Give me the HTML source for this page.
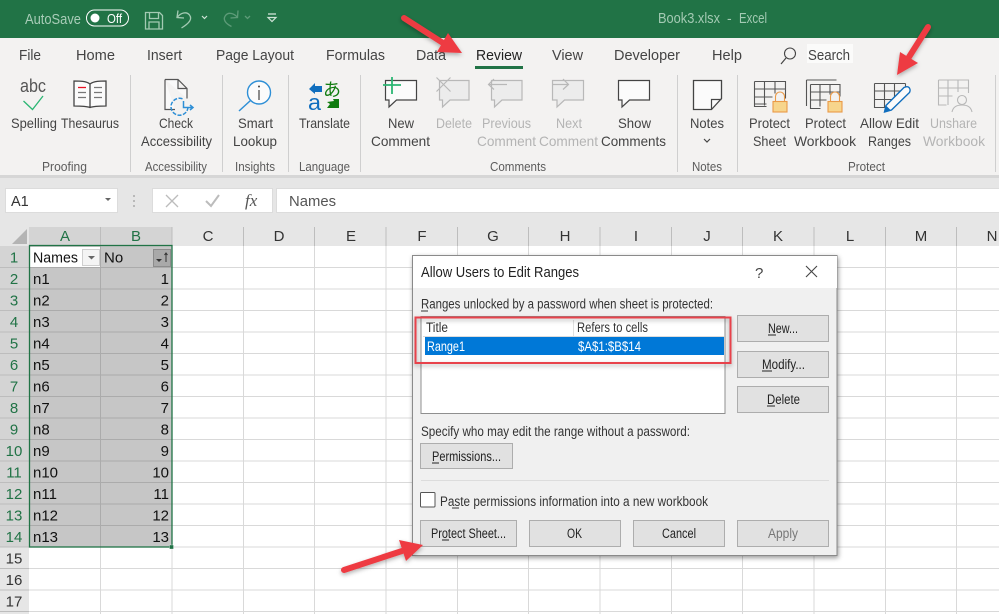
<!DOCTYPE html>
<html>
<head>
<meta charset="utf-8">
<title>Book3.xlsx - Excel</title>
<style>
html,body{margin:0;padding:0;width:999px;height:614px;overflow:hidden;background:#fff}
svg{display:block;font-family:"Liberation Sans",sans-serif;filter:blur(.3px)}
.tab{font-size:14.5px;fill:#444}
.r{font-size:14px;fill:#444}
.d{font-size:14px;fill:#b4b4b4}
.g{font-size:13px;fill:#5c5c5c}
.h{font-size:15px;fill:#333;text-anchor:middle}
.hs{font-size:15px;fill:#217346;text-anchor:middle}
.c{font-size:15px;fill:#111}
.n{font-size:15px;fill:#111;text-anchor:end}
.t{font-size:13.5px;fill:#333}
.b{font-size:13.5px;fill:#222}
.btn{fill:#e1e1e1;stroke:#adadad;stroke-width:1}
</style>
</head>
<body>
<svg width="999" height="614" viewBox="0 0 999 614" xmlns="http://www.w3.org/2000/svg">
<defs>
<filter id="sh" x="-10%" y="-10%" width="125%" height="125%"><feDropShadow dx="1" dy="2" stdDeviation="2.5" flood-color="#000" flood-opacity=".4"/></filter>
<filter id="ash" x="-30%" y="-30%" width="170%" height="170%"><feDropShadow dx="0" dy="2" stdDeviation="2" flood-color="#000" flood-opacity=".3"/></filter>
</defs>

<!-- title bar -->
<rect width="999" height="38" fill="#217346"/>
<text x="25" y="24" font-size="14.500" fill="#a9cdb8" textLength="56" lengthAdjust="spacingAndGlyphs">AutoSave</text>
<rect x="86.500" y="10" width="42" height="16" rx="8" fill="none" stroke="#fff"/>
<circle cx="95" cy="18" r="4.500" fill="#fff"/>
<text x="107" y="23" font-size="13" fill="#fff" textLength="15" lengthAdjust="spacingAndGlyphs">Off</text>
<g fill="none" stroke="#a3cab3" stroke-width="1.300">
<path d="M145.500 12.500h14l3 3v13.500h-17z"/><path d="M149.500 12.500v6h9v-6M149 29v-7h10v7"/>
<path d="M178 10.500l-1 7 7 .5M177.500 17c3-4 9-6 12-2 3 4 0 8-8 13"/>
</g>
<path d="M202 16l2.500 2.500 2.500-2.500" fill="none" stroke="#cfe3d7" stroke-width="1.200"/>
<g fill="none" stroke="#5d9b78" stroke-width="1.300">
<path d="M238 10.500l-.5 7-7 .5M237.500 17.500c-3-4-9-6-12-2-3 4 0 8 6 11"/>
<path d="M245 16l2.500 2.500 2.500-2.500"/>
</g>
<path d="M268 14h8" stroke="#cfe3d7" stroke-width="1.300"/>
<path d="M268 17.500h8l-4 4z" fill="none" stroke="#cfe3d7" stroke-width="1.200"/>
<text x="658" y="23" font-size="14.500" fill="#a3cab3" textLength="62" lengthAdjust="spacingAndGlyphs">Book3.xlsx</text>
<text x="727" y="23" font-size="14" fill="#a3cab3">-</text>
<text x="739" y="23" font-size="14.500" fill="#a3cab3" textLength="28" lengthAdjust="spacingAndGlyphs">Excel</text>

<!-- ribbon -->
<rect y="38" width="999" height="138" fill="#f3f2f1"/>
<rect y="176" width="999" height="70" fill="#e6e6e6"/>
<rect y="175" width="999" height="3" fill="#d6d6d6"/>

<text class="tab" x="19" y="60" textLength="22" lengthAdjust="spacingAndGlyphs">File</text>
<text class="tab" x="76" y="60" textLength="39" lengthAdjust="spacingAndGlyphs">Home</text>
<text class="tab" x="147" y="60" textLength="35" lengthAdjust="spacingAndGlyphs">Insert</text>
<text class="tab" x="216" y="60" textLength="78" lengthAdjust="spacingAndGlyphs">Page Layout</text>
<text class="tab" x="326" y="60" textLength="59" lengthAdjust="spacingAndGlyphs">Formulas</text>
<text class="tab" x="416" y="60" textLength="30" lengthAdjust="spacingAndGlyphs">Data</text>
<text class="tab" x="476" y="60" textLength="46" lengthAdjust="spacingAndGlyphs" style="fill:#222">Review</text>
<rect x="475" y="66" width="48" height="3" fill="#217346"/>
<text class="tab" x="552" y="60" textLength="31" lengthAdjust="spacingAndGlyphs">View</text>
<text class="tab" x="614" y="60" textLength="66" lengthAdjust="spacingAndGlyphs">Developer</text>
<text class="tab" x="712" y="60" textLength="30" lengthAdjust="spacingAndGlyphs">Help</text>
<circle cx="790" cy="53.500" r="5.500" fill="none" stroke="#444" stroke-width="1.100"/>
<path d="M786 58l-5 6" stroke="#444" stroke-width="1.200"/>
<rect x="807" y="44" width="46" height="19" fill="#fbfbfa"/>
<text class="tab" x="808" y="60" textLength="42" lengthAdjust="spacingAndGlyphs">Search</text>

<!-- separators -->
<g fill="#cfcfcf">
<rect x="130" y="75" width="1" height="97"/><rect x="222" y="75" width="1" height="97"/>
<rect x="288" y="75" width="1" height="97"/><rect x="360" y="75" width="1" height="97"/>
<rect x="677" y="75" width="1" height="97"/><rect x="737" y="75" width="1" height="97"/>
<rect x="995" y="75" width="1" height="97"/>
</g>

<!-- icons: proofing -->
<text x="20" y="92" font-size="18.500" fill="#555" textLength="26" lengthAdjust="spacingAndGlyphs">abc</text>
<path d="M23.500 101l9 8.500 10.500-13.500" fill="none" stroke="#2bb673" stroke-width="1.300"/>
<path d="M90 84c-4-3-10-3-16-3v25c6 0 12 0 16 1.500 4-1.500 10-1.500 16-1.500v-25c-6 0-12 0-16 3zM90 84v23" fill="#fbfbfb" stroke="#444" stroke-width="1.300"/>
<path d="M78 87.500h8" stroke="#e81123" stroke-width="1.300"/>
<path d="M78 92.500h8M78 97.500h8M94 87.500h8M94 92.500h8M94 97.500h8" stroke="#777" stroke-width="1.200"/>

<!-- check accessibility -->
<path d="M165 79.500h13l9 9v10M178 79.500v9h9M165 79.500v30h10" fill="#f9f9f9" stroke="#555" stroke-width="1.200"/>
<path d="M188 107a8.500 8.500 0 1 1-5-8" fill="none" stroke="#2e8fd6" stroke-width="1.500" stroke-dasharray="4 1.500"/>
<path d="M183.500 101v6.500h9M190 105l3 2.500-3 2.500" fill="none" stroke="#2e8fd6" stroke-width="1.500"/>

<!-- smart lookup -->
<circle cx="259" cy="92.500" r="11.500" fill="#fbfbfb" stroke="#2e8fd6" stroke-width="1.400"/>
<path d="M250.500 100.500l-11.500 10.500" stroke="#2e8fd6" stroke-width="1.500"/>
<path d="M259 90v10" stroke="#444" stroke-width="1.200"/><circle cx="259" cy="86.500" r="1" fill="#444"/>

<!-- translate -->
<path d="M309 89l6-6v3h7v6h-7v2z" fill="#106ebe"/>
<text x="308" y="110" font-size="22" fill="#106ebe" textLength="13" lengthAdjust="spacingAndGlyphs">a</text>
<text x="323" y="96" font-size="18" fill="#107c10" font-family="'Noto Sans CJK JP',sans-serif">あ</text>
<path d="M339 99v9h-12l3-4-3-2 7-1-1-2z" fill="#107c10"/>

<!-- comments -->
<g stroke="#444" stroke-width="1.200">
<path d="M385.500 80.500h31v19.500h-20l-7.500 7v-7h-3.500z" fill="#fbfbfb"/>
<path d="M618.500 80.500h31v19.500h-20l-7.500 7v-7h-3.500z" fill="#fbfbfb"/>
</g>
<path d="M392 77v17M383 85h18" stroke="#2bb673" stroke-width="1.800"/>
<g stroke="#b8b8b8" stroke-width="1.200" fill="#ececec">
<path d="M439.500 80.500h29.500v19.500h-19l-7.500 7v-7h-3z"/>
<path d="M491.500 80.500h30.500v19.500h-20l-7.500 7v-7h-3z"/>
<path d="M552.500 80.500h31v19.500h-19l-7.500 7v-7h-4.500z"/>
<path d="M436.500 77.500l14 14M450.500 77.500l-14 14" fill="none"/>
<path d="M507 84.500h-18M494 79l-5.500 5.500 5.500 5" fill="none"/>
<path d="M552 84.500h16M563 79l5.500 5.500-5.500 5" fill="none"/>
</g>

<!-- notes -->
<path d="M693.500 80.500h28v18l-10 11h-18z" fill="#fbfbfb" stroke="#444" stroke-width="1.300"/>
<path d="M711.500 109.500v-10h10" fill="none" stroke="#444" stroke-width="1.200"/>
<path d="M704 139l3 3 3-3" fill="none" stroke="#444" stroke-width="1.200"/>

<!-- protect sheet, workbook, allow edit, unshare -->
<g fill="none" stroke="#555" stroke-width="1.100">
<path d="M754.500 81.500h31v17M754.500 81.500v25h12M754.500 89h31M754.500 97h18M754.500 104h12M764.500 81.500v24M775 81.500v12"/>
<path d="M810.500 84.500h29.500v12M810.500 84.500v24h10M810.500 92h29M810.500 100h16M820 84.500v22M830 84.500v10M806.500 80h30M806.500 80v26"/>
<path d="M874.500 83.500h31M874.500 83.500v24h19M874.500 91h30M874.500 99.500h22M884.500 83.500v24M894.500 83.500v18M905.500 83.500v6"/>
</g>
<g fill="#f7d58c" stroke="#ea9a48" stroke-width="1.100">
<rect x="773" y="101.500" width="14" height="10.500"/><rect x="828" y="101.500" width="14" height="10.500"/>
<path d="M775.500 101.500v-5a4.500 4.500 0 0 1 9 0v5M830.500 101.500v-5a4.500 4.500 0 0 1 9 0v5" fill="none"/>
</g>
<path d="M884.500 112l1.500-6.500 18-18c2-1 4-1 5 0s1.500 3 .5 5l-18 17.500z" fill="#fbfbfb" stroke="#106ebe" stroke-width="1.400"/>
<path d="M884.500 112l1.500-6.500 5 5z" fill="#106ebe"/>
<g fill="none" stroke="#b8b8b8" stroke-width="1.100">
<path d="M938.500 80h30v13M938.500 80v25h8M938.500 88h30M938.500 96h14M948 80v25M958 80v12"/>
<circle cx="962" cy="100" r="4.500"/><path d="M952 112c1-5 5-7 10-7s9 2 10 7"/>
</g>

<!-- ribbon labels -->
<text class="r" x="11" y="128" textLength="46" lengthAdjust="spacingAndGlyphs">Spelling</text>
<text class="r" x="61" y="128" textLength="58" lengthAdjust="spacingAndGlyphs">Thesaurus</text>
<text class="r" x="159" y="128" textLength="34" lengthAdjust="spacingAndGlyphs">Check</text>
<text class="r" x="141" y="146" textLength="71" lengthAdjust="spacingAndGlyphs">Accessibility</text>
<text class="r" x="238" y="128" textLength="35" lengthAdjust="spacingAndGlyphs">Smart</text>
<text class="r" x="233" y="146" textLength="44" lengthAdjust="spacingAndGlyphs">Lookup</text>
<text class="r" x="299" y="128" textLength="51" lengthAdjust="spacingAndGlyphs">Translate</text>
<text class="r" x="388" y="128" textLength="26" lengthAdjust="spacingAndGlyphs">New</text>
<text class="r" x="371" y="146" textLength="59" lengthAdjust="spacingAndGlyphs">Comment</text>
<text class="d" x="436" y="128" textLength="36" lengthAdjust="spacingAndGlyphs">Delete</text>
<text class="d" x="482" y="128" textLength="49" lengthAdjust="spacingAndGlyphs">Previous</text>
<text class="d" x="477" y="146" textLength="59" lengthAdjust="spacingAndGlyphs">Comment</text>
<text class="d" x="556" y="128" textLength="26" lengthAdjust="spacingAndGlyphs">Next</text>
<text class="d" x="539" y="146" textLength="59" lengthAdjust="spacingAndGlyphs">Comment</text>
<text class="r" x="618" y="128" textLength="33" lengthAdjust="spacingAndGlyphs">Show</text>
<text class="r" x="601" y="146" textLength="65" lengthAdjust="spacingAndGlyphs">Comments</text>
<text class="r" x="690" y="128" textLength="34" lengthAdjust="spacingAndGlyphs">Notes</text>
<text class="r" x="749" y="128" textLength="41" lengthAdjust="spacingAndGlyphs">Protect</text>
<text class="r" x="753" y="146" textLength="33" lengthAdjust="spacingAndGlyphs">Sheet</text>
<text class="r" x="805" y="128" textLength="41" lengthAdjust="spacingAndGlyphs">Protect</text>
<text class="r" x="794" y="146" textLength="62" lengthAdjust="spacingAndGlyphs">Workbook</text>
<text class="r" x="860" y="128" textLength="59" lengthAdjust="spacingAndGlyphs">Allow Edit</text>
<text class="r" x="868" y="146" textLength="43" lengthAdjust="spacingAndGlyphs">Ranges</text>
<text class="d" x="930" y="128" textLength="47" lengthAdjust="spacingAndGlyphs">Unshare</text>
<text class="d" x="923" y="146" textLength="62" lengthAdjust="spacingAndGlyphs">Workbook</text>

<text class="g" x="42" y="171" textLength="45" lengthAdjust="spacingAndGlyphs">Proofing</text>
<text class="g" x="145" y="171" textLength="62" lengthAdjust="spacingAndGlyphs">Accessibility</text>
<text class="g" x="235" y="171" textLength="40" lengthAdjust="spacingAndGlyphs">Insights</text>
<text class="g" x="299" y="171" textLength="51" lengthAdjust="spacingAndGlyphs">Language</text>
<text class="g" x="490" y="171" textLength="56" lengthAdjust="spacingAndGlyphs">Comments</text>
<text class="g" x="692" y="171" textLength="30" lengthAdjust="spacingAndGlyphs">Notes</text>
<text class="g" x="848" y="171" textLength="37" lengthAdjust="spacingAndGlyphs">Protect</text>

<!-- formula bar -->
<rect x="5.500" y="188.500" width="112" height="24" fill="#fff" stroke="#dcdcdc"/>
<text x="11" y="206" font-size="14.500" fill="#333">A1</text>
<path d="M105 198h6l-3 3z" fill="#666"/>
<path d="M134 195v2M134 200v2M134 205v2" stroke="#aaa" stroke-width="1.500"/>
<rect x="152.500" y="188.500" width="120" height="24" fill="#fff" stroke="#dcdcdc"/>
<path d="M166 195l12 12M178 195l-12 12" stroke="#bcbcbc" stroke-width="1.300"/>
<path d="M206 201l5 5 8-11" fill="none" stroke="#bcbcbc" stroke-width="2"/>
<text x="245" y="206" font-size="17" font-style="italic" fill="#555" font-family="'Liberation Serif',serif">fx</text>
<rect x="276.500" y="188.500" width="730" height="24" fill="#fff" stroke="#dcdcdc"/>
<text x="289" y="206" font-size="14.500" fill="#555" textLength="47" lengthAdjust="spacingAndGlyphs">Names</text>

<!-- sheet -->
<rect x="0" y="227" width="999" height="19" fill="#e6e6e6"/>
<rect x="0" y="246" width="29" height="368" fill="#e6e6e6"/>
<rect x="29" y="227" width="143" height="19" fill="#d4d4d4"/>
<rect x="0" y="246" width="29" height="301" fill="#d4d4d4"/>
<rect x="29" y="246" width="970" height="368" fill="#fff"/>
<path d="M27 229v15H12z" fill="#b4b4b4"/>
<path d="M100.500 246V614M172 246V614M243.500 246V614M314.500 246V614M386 246V614M457.500 246V614M528.500 246V614M600 246V614M671.500 246V614M742.500 246V614M814 246V614M885.500 246V614M956.500 246V614M29 267.500H999M29 289H999M29 310.500H999M29 332H999M29 353.500H999M29 375H999M29 396.500H999M29 418H999M29 439.500H999M29 461H999M29 482.500H999M29 504H999M29 525.500H999M29 547H999M29 568.500H999M29 590H999M29 611.500H999" fill="none" stroke="#d9d9d9"/>
<path d="M100.500 227V246M172 227V246M243.500 227V246M314.500 227V246M386 227V246M457.500 227V246M528.500 227V246M600 227V246M671.500 227V246M742.500 227V246M814 227V246M885.500 227V246M956.500 227V246M0 267.500H29M0 289H29M0 310.500H29M0 332H29M0 353.500H29M0 375H29M0 396.500H29M0 418H29M0 439.500H29M0 461H29M0 482.500H29M0 504H29M0 525.500H29M0 547H29M0 568.500H29M0 590H29M0 611.500H29" fill="none" stroke="#bdbdbd"/>

<!-- selection -->
<rect x="30" y="246" width="142" height="301" fill="#c6c6c6"/>
<rect x="30" y="247" width="70" height="20" fill="#fff"/>
<path d="M100.500 246V547M30 289H172M30 310.500H172M30 332H172M30 353.500H172M30 375H172M30 396.500H172M30 418H172M30 439.500H172M30 461H172M30 482.500H172M30 504H172M30 525.500H172M100 267.500H172M30 267.500H100" fill="none" stroke="#ababab"/>
<rect x="29.500" y="245.500" width="142.500" height="301.500" fill="none" stroke="#217346" stroke-width="1.300"/>
<rect x="169.500" y="545" width="4" height="4" fill="#217346" stroke="#fff" stroke-width=".3"/>

<rect x="82.500" y="249.500" width="17" height="16" fill="#f4f4f4" stroke="#cfcfcf"/>
<path d="M88 256h7l-3.500 3.500z" fill="#666"/>
<rect x="153.500" y="249.500" width="17" height="17" fill="#a9a9a9" stroke="#8c8c8c"/>
<path d="M156 259h6l-3 3z" fill="#333"/><path d="M166 262v-9M164.500 255l1.500-2 1.500 2" fill="none" stroke="#333"/>

<g>
<text class="hs" x="65" y="241">A</text><text class="hs" x="136" y="241">B</text>
<text class="h" x="208" y="241">C</text><text class="h" x="279" y="241">D</text><text class="h" x="351" y="241">E</text><text class="h" x="422" y="241">F</text><text class="h" x="493" y="241">G</text><text class="h" x="565" y="241">H</text><text class="h" x="636" y="241">I</text><text class="h" x="707" y="241">J</text><text class="h" x="778" y="241">K</text><text class="h" x="850" y="241">L</text><text class="h" x="921" y="241">M</text><text class="h" x="992" y="241">N</text>
</g>
<g>
<text class="hs" x="14" y="262.500">1</text><text class="hs" x="14" y="284">2</text><text class="hs" x="14" y="305.500">3</text><text class="hs" x="14" y="327">4</text><text class="hs" x="14" y="348.500">5</text><text class="hs" x="14" y="370">6</text><text class="hs" x="14" y="391.500">7</text><text class="hs" x="14" y="413">8</text><text class="hs" x="14" y="434.500">9</text><text class="hs" x="14" y="456">10</text><text class="hs" x="14" y="477.500">11</text><text class="hs" x="14" y="499">12</text><text class="hs" x="14" y="520.500">13</text><text class="hs" x="14" y="542">14</text>
<text class="h" x="14" y="563.500">15</text><text class="h" x="14" y="585">16</text><text class="h" x="14" y="606.500">17</text>
</g>
<g>
<text class="c" x="33" y="262.500" textLength="45" lengthAdjust="spacingAndGlyphs">Names</text><text class="c" x="104" y="262.500">No</text>
<text class="c" x="33" y="284">n1</text><text class="n" x="169" y="284">1</text>
<text class="c" x="33" y="305.500">n2</text><text class="n" x="169" y="305.500">2</text>
<text class="c" x="33" y="327">n3</text><text class="n" x="169" y="327">3</text>
<text class="c" x="33" y="348.500">n4</text><text class="n" x="169" y="348.500">4</text>
<text class="c" x="33" y="370">n5</text><text class="n" x="169" y="370">5</text>
<text class="c" x="33" y="391.500">n6</text><text class="n" x="169" y="391.500">6</text>
<text class="c" x="33" y="413">n7</text><text class="n" x="169" y="413">7</text>
<text class="c" x="33" y="434.500">n8</text><text class="n" x="169" y="434.500">8</text>
<text class="c" x="33" y="456">n9</text><text class="n" x="169" y="456">9</text>
<text class="c" x="33" y="477.500">n10</text><text class="n" x="169" y="477.500">10</text>
<text class="c" x="33" y="499">n11</text><text class="n" x="169" y="499">11</text>
<text class="c" x="33" y="520.500">n12</text><text class="n" x="169" y="520.500">12</text>
<text class="c" x="33" y="542">n13</text><text class="n" x="169" y="542">13</text>
</g>

<!-- dialog -->
<rect x="412.500" y="255.500" width="424.500" height="300" fill="#f0f0f0" stroke="#8a8a8a" filter="url(#sh)"/>
<rect x="413" y="256" width="424" height="32" fill="#fff"/>
<text x="421" y="277" font-size="14.500" fill="#222" textLength="158" lengthAdjust="spacingAndGlyphs">Allow Users to Edit Ranges</text>
<text x="755" y="278" font-size="15" fill="#444">?</text>
<path d="M806 266l11 11M817 266l-11 11" stroke="#444" stroke-width="1.100"/>

<text class="t" x="421" y="308.500" textLength="292" lengthAdjust="spacingAndGlyphs">Ranges unlocked by a password when sheet is protected:</text>
<path d="M421 311h7" stroke="#333"/>
<rect x="421" y="316.500" width="304" height="97" fill="#fff" stroke="#8f8f8f"/>
<path d="M573.500 320v17" stroke="#e0e0e0"/><path d="M423 336.500h301" stroke="#dcdcdc"/>
<text class="t" x="426" y="332" textLength="22" lengthAdjust="spacingAndGlyphs">Title</text>
<text class="t" x="577" y="332" textLength="71" lengthAdjust="spacingAndGlyphs">Refers to cells</text>
<rect x="425" y="337" width="299" height="18" fill="#0078d7"/>
<text x="427" y="351" font-size="13.500" fill="#fff" textLength="38" lengthAdjust="spacingAndGlyphs">Range1</text>
<text x="578" y="351" font-size="13.500" fill="#fff" textLength="63" lengthAdjust="spacingAndGlyphs">$A$1:$B$14</text>
<rect x="415.500" y="317.500" width="315" height="45.500" fill="none" stroke="#e8434c" stroke-width="2" filter="url(#ash)"/>

<rect class="btn" x="737.500" y="315.500" width="91" height="26"/>
<text class="b" x="768" y="333" textLength="30" lengthAdjust="spacingAndGlyphs">New...</text><path d="M768 335h8" stroke="#222"/>
<rect class="btn" x="737.500" y="351.500" width="91" height="26"/>
<text class="b" x="762" y="369" textLength="43" lengthAdjust="spacingAndGlyphs">Modify...</text><path d="M762 371h10" stroke="#222"/>
<rect class="btn" x="737.500" y="386.500" width="91" height="26"/>
<text class="b" x="767" y="404" textLength="33" lengthAdjust="spacingAndGlyphs">Delete</text><path d="M767 406h8" stroke="#222"/>

<text class="t" x="421" y="436" textLength="269" lengthAdjust="spacingAndGlyphs">Specify who may edit the range without a password:</text>
<rect class="btn" x="420.500" y="443.500" width="92" height="25"/>
<text class="b" x="432" y="461" textLength="69" lengthAdjust="spacingAndGlyphs">Permissions...</text><path d="M432 463h7" stroke="#222"/>
<path d="M421 480.500h408" stroke="#dcdcdc"/>
<rect x="420.500" y="492.500" width="14.500" height="14.500" rx="1" fill="#fff" stroke="#555"/>
<text class="t" x="440" y="506" textLength="268" lengthAdjust="spacingAndGlyphs">Paste permissions information into a new workbook</text>
<path d="M452 508h7" stroke="#333"/>
<rect class="btn" x="420.500" y="520.500" width="96" height="26"/>
<text class="b" x="431" y="538" textLength="75" lengthAdjust="spacingAndGlyphs">Protect Sheet...</text><path d="M442 540h7" stroke="#222"/>
<rect class="btn" x="529.500" y="520.500" width="91" height="26"/>
<text class="b" x="567" y="538" textLength="15" lengthAdjust="spacingAndGlyphs">OK</text>
<rect class="btn" x="633.500" y="520.500" width="91" height="26"/>
<text class="b" x="662" y="538" textLength="34" lengthAdjust="spacingAndGlyphs">Cancel</text>
<rect class="btn" x="737.500" y="520.500" width="91" height="26"/>
<text class="b" x="768" y="538" textLength="30" lengthAdjust="spacingAndGlyphs" style="fill:#777">Apply</text>

<!-- arrows -->
<g filter="url(#ash)">
<g stroke="#ee3b43" stroke-width="6" stroke-linecap="round">
<path d="M404 18L443 43"/>
<path d="M928 27L909 57"/>
<path d="M344 570L402 551"/>
</g>
<g fill="#ee3b43">
<path d="M462 53L448 33 437 52z"/>
<path d="M897 75L900 52 918 63z"/>
<path d="M423 545L399 540 406 561z"/>
</g>
</g>
</svg>
</body>
</html>
